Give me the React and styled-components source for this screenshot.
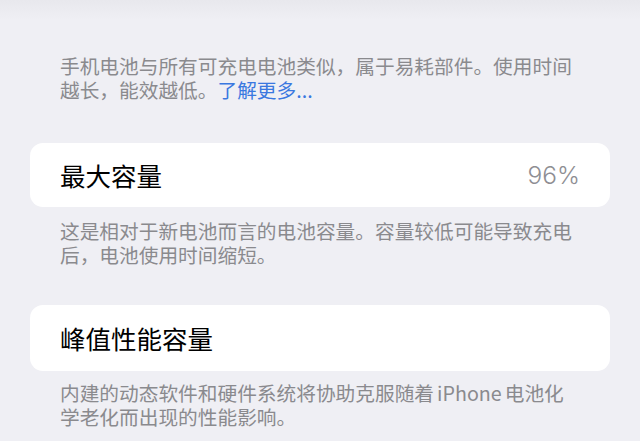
import styled, { createGlobalStyle } from "styled-components";

const COLOR = {
  page: "#efeff4",
  band: "#e8e8ed",
  card: "#ffffff",
  label: "#000000",
  note: "#8a8a8e",
  value: "#8e8e93",
  link: "#3a78e0",
};

const FONT = `"Noto Sans CJK SC", "Noto Sans", sans-serif`;

const GlobalStyle = createGlobalStyle`
  html, body {
    margin: 0;
    padding: 0;
    background: ${COLOR.page};
  }
  body {
    width: 640px;
    height: 441px;
    overflow: hidden;
    font-family: ${FONT};
    -webkit-font-smoothing: antialiased;
  }
`;

const Page = styled.div`
  display: flex;
  flex-direction: column;
  width: 640px;
  height: 441px;
  background: ${COLOR.page};
`;

const TopBand = styled.div`
  height: 20px;
  background: linear-gradient(${COLOR.band}, ${COLOR.page});
`;

const Note = styled.p`
  margin: ${({ top }) => top}px 0 0;
  padding: 0 60px;
  width: 518px;
  font-size: 19.7px;
  line-height: 24px;
  color: ${COLOR.note};
  font-weight: 400;
`;

const Link = styled.a`
  color: ${COLOR.link};
  text-decoration: none;
`;

const Latin = styled.span`
  margin: 0 3px;
`;

const Card = styled.div`
  margin: ${({ top }) => top}px 30px 0;
  height: ${({ h }) => h}px;
  padding: 0 30px;
  background: ${COLOR.card};
  border-radius: 13px;
  display: flex;
  align-items: center;
  justify-content: space-between;
`;

const Label = styled.span`
  font-size: 25.5px;
  color: ${COLOR.label};
  font-weight: 400;
  line-height: 1;
`;

const Value = styled.span`
  font-family: "Inter", "Liberation Sans", sans-serif;
  font-size: 24.5px;
  font-weight: 300;
  color: ${COLOR.value};
  line-height: 1;
`;

const App = () => {
  return (
    <>
      <GlobalStyle />
      <Page>
        <TopBand />
        <Note top={34}>
          手机电池与所有可充电电池类似，属于易耗部件。使用时间越长，能效越低。<Link>了解更多...</Link>
        </Note>
        <Card top={41} h={64}>
          <Label>最大容量</Label>
          <Value>96%</Value>
        </Card>
        <Note top={12}>
          这是相对于新电池而言的电池容量。容量较低可能导致充电后，电池使用时间缩短。
        </Note>
        <Card top={38} h={66}>
          <Label>峰值性能容量</Label>
        </Card>
        <Note top={10}>
          内建的动态软件和硬件系统将协助克服随着<Latin>iPhone</Latin>电池化学老化而出现的性能影响。
        </Note>
      </Page>
    </>
  );
};

export default App;
